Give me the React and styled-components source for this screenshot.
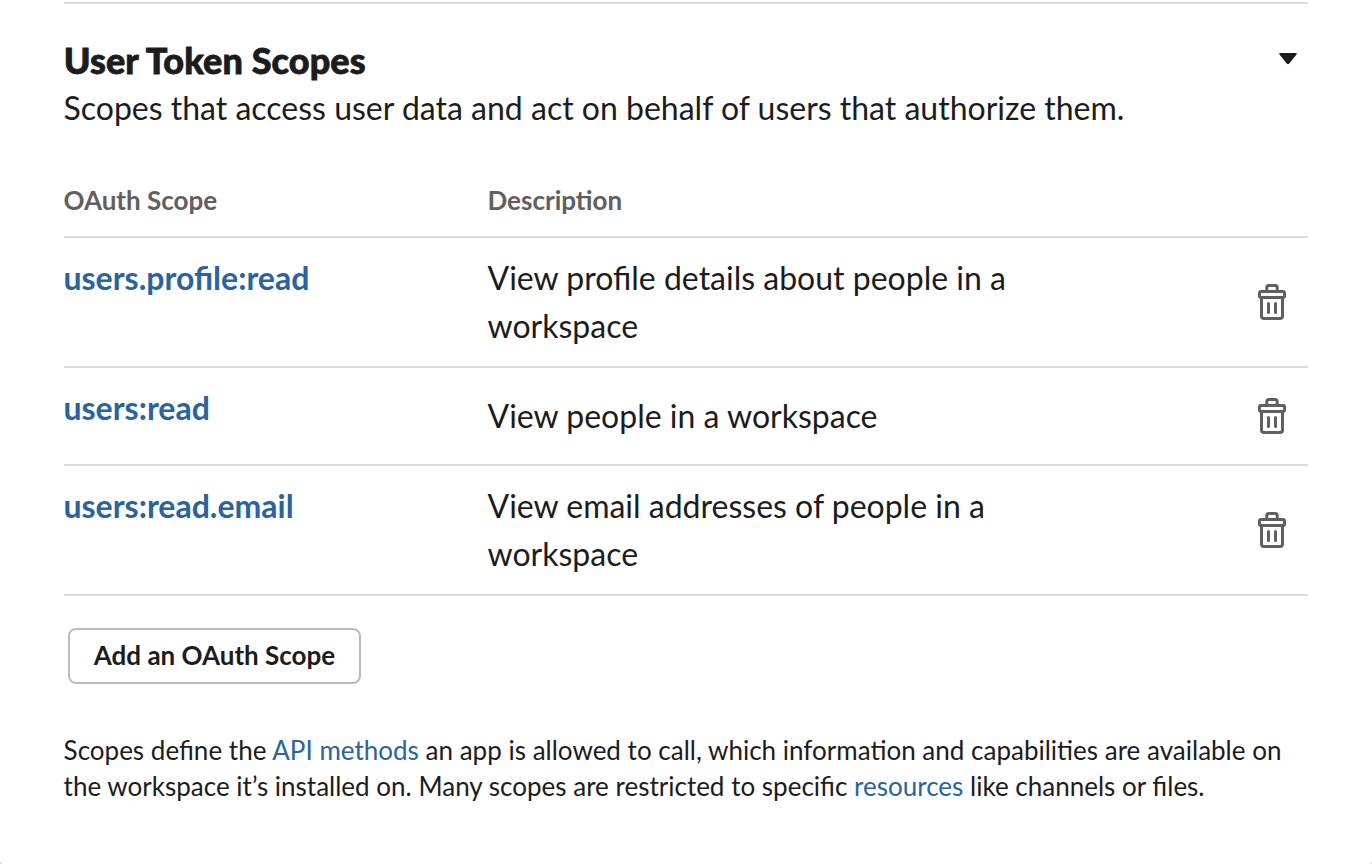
import React from 'react';
import styled, { createGlobalStyle } from 'styled-components';

const Global = createGlobalStyle`
  * { box-sizing: border-box; }
  html, body { margin: 0; background: #fff; }
  body { font-family: Lato, "Liberation Sans", sans-serif; color: #1d1c1d; -webkit-font-smoothing: antialiased; }
`;

const Panel = styled.main`
  width: 1372px;
  height: 864px;
  padding: 2px 64px 0;
  overflow: hidden;
  background: #fff;
  border-radius: 0 0 4px 4px;
`;

const Backdrop = styled.div`
  width: 1372px;
  height: 864px;
  background: #dcdcdc;
`;

const Section = styled.section`
  border-top: 2px solid #ddd;
`;

const Header = styled.header`
  display: flex;
  justify-content: space-between;
  height: 175px;
  padding: 33px 11px 0 0;
`;

const Title = styled.h2`
  margin: 0 0 1px -0.3px;
  font-size: 36px;
  line-height: 46px;
  font-weight: 900;
  letter-spacing: 0.1px;
  white-space: nowrap;
  -webkit-text-stroke: 0.8px currentColor;
`;

const Subtitle = styled.p`
  margin: 0 0 0 -0.5px;
  font-size: 32px;
  line-height: 48px;
  white-space: nowrap;
`;

const Caret = styled.svg`
  width: 18px;
  height: 12px;
  margin-top: 16px;
`;

const Row = styled.div`
  display: grid;
  grid-template-columns: 424px 580px 1fr;
  height: ${(p) => p.$height}px;
  border-bottom: 2px solid #ddd;
`;

const HeadCell = styled.div`
  margin-left: -0.5px;
  font-size: 26px;
  line-height: 42px;
  font-weight: 700;
  color: #616061;
`;

const ScopeLink = styled.a`
  margin-left: -0.5px;
  padding-top: 16px;
  font-size: 32px;
  line-height: 48px;
  font-weight: 700;
  color: #2a639f;
`;

const Description = styled.div`
  align-self: center;
  margin-left: -0.5px;
  font-size: 32px;
  line-height: 48px;
`;

const DeleteButton = styled.button`
  display: flex;
  align-self: center;
  justify-self: end;
  margin: 0 22px 0 0;
  padding: 0;
  border: 0;
  background: none;
  color: #616061;
`;

const AddButton = styled.button`
  display: block;
  width: 293px;
  height: 56px;
  margin: 32px 0 0 4px;
  padding: 0 0 2px;
  border: 2px solid #bbb;
  border-radius: 8px;
  background: #fff;
  font: 700 26px/50px Lato, sans-serif;
  color: #1d1c1d;
  white-space: nowrap;
`;

const Note = styled.p`
  margin: 48px 0 0 -0.4px;
  font-size: 26px;
  line-height: 36px;
  word-spacing: 0.05px;
  white-space: nowrap;
`;

const Link = styled.a`
  color: #2a639f;
`;

const TrashIcon = () => (
  <svg width="28" height="36" viewBox="0 0 28 36" fill="none" stroke="currentColor" strokeWidth="3">
    <path d="M8.8 7V3.5a2 2 0 0 1 2-2h6.4a2 2 0 0 1 2 2V7" />
    <rect x="1.5" y="7.5" width="25" height="6" rx="1.5" />
    <path d="M3.5 14v18a2.5 2.5 0 0 0 2.5 2.5h16a2.5 2.5 0 0 0 2.5-2.5V14" />
    <path d="M10.5 19.5v9M17.5 19.5v9" strokeLinecap="round" />
  </svg>
);

const scopes = [
  { name: 'users.profile:read', lines: ['View profile details about people in a', 'workspace'], height: 130 },
  { name: 'users:read', lines: ['View people in a workspace'], height: 98 },
  { name: 'users:read.email', lines: ['View email addresses of people in a', 'workspace'], height: 130 },
];

export default function App() {
  return (
    <Backdrop>
      <Global />
      <Panel>
        <Section>
          <Header>
            <div>
              <Title>User Token Scopes</Title>
              <Subtitle>Scopes that access user data and act on behalf of users that authorize them.</Subtitle>
            </div>
            <Caret viewBox="0 0 18 12"><path d="M1.3 0h15.4q2 0 .8 1.6L10.3 10.5q-1.3 1.4-2.6 0L.5 1.6Q-.7 0 1.3 0Z" fill="#1d1c1d" /></Caret>
          </Header>
          <Row $height={59}>
            <HeadCell>OAuth Scope</HeadCell>
            <HeadCell>Description</HeadCell>
          </Row>
          {scopes.map((s) => (
            <Row key={s.name} $height={s.height}>
              <ScopeLink>{s.name}</ScopeLink>
              <Description>{s.lines.map((l) => <div key={l}>{l}</div>)}</Description>
              <DeleteButton aria-label="Remove scope"><TrashIcon /></DeleteButton>
            </Row>
          ))}
          <AddButton>Add an OAuth Scope</AddButton>
          <Note>
            Scopes define the <Link>API methods</Link> an app is allowed to call, which information and capabilities are available on<br />
            the workspace it’s installed on. Many scopes are restricted to specific <Link>resources</Link> like channels or files.
          </Note>
        </Section>
      </Panel>
    </Backdrop>
  );
}
